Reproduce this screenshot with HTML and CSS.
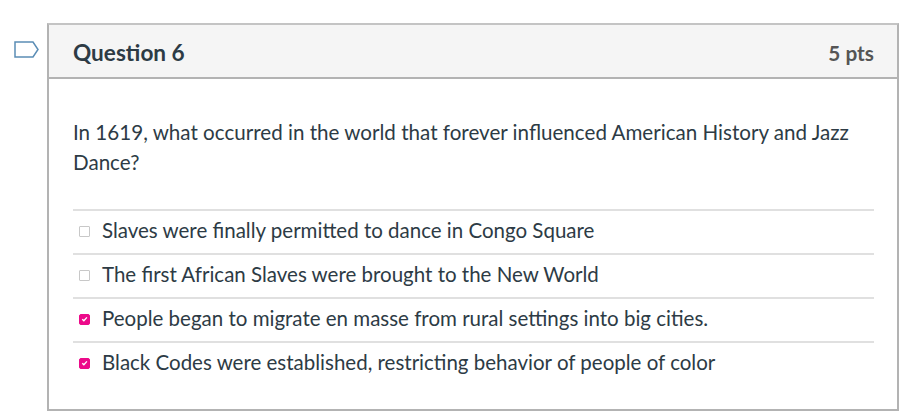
FILE: index.html
```html
<!DOCTYPE html>
<html>
<head>
<meta charset="utf-8">
<link rel="stylesheet" href="styles.css">
</head>
<body>
<div class="page">
  <div class="flag-col">
    <svg class="flag" width="26" height="17" viewBox="0 0 26 17">
      <path d="M1 1 H19 L24 8.5 L19 16 H1 Z" fill="none" stroke="#5b8db5" stroke-width="1.5" stroke-linejoin="miter"/>
    </svg>
  </div>
  <div class="card">
    <div class="header">
      <span class="title">Question 6</span>
      <span class="pts">5 pts</span>
    </div>
    <div class="body">
      <p class="question">In 1619, what occurred in the world that forever influenced American History and Jazz Dance?</p>
      <div class="answers">
        <div class="answer"><span class="box"></span><span>Slaves were finally permitted to dance in Congo Square</span></div>
        <div class="answer"><span class="box"></span><span>The first African Slaves were brought to the New World</span></div>
        <div class="answer"><span class="box checked"><svg viewBox="0 0 12 12" width="12" height="12"><path d="M3 6.2 L5.2 8.4 L9.2 3.8" fill="none" stroke="#fff" stroke-width="1.8"/></svg></span><span>People began to migrate en masse from rural settings into big cities.</span></div>
        <div class="answer"><span class="box checked"><svg viewBox="0 0 12 12" width="12" height="12"><path d="M3 6.2 L5.2 8.4 L9.2 3.8" fill="none" stroke="#fff" stroke-width="1.8"/></svg></span><span>Black Codes were established, restricting behavior of people of color</span></div>
      </div>
    </div>
  </div>
</div>
</body>
</html>
```
FILE: styles.css
```css
html, body {
  margin: 0;
  padding: 0;
  background: #fff;
  font-family: Lato, "Liberation Sans", sans-serif;
  color: #2d3b45;
}
.page {
  display: flex;
  padding-top: 23px;
}
.flag-col {
  width: 47px;
  flex: none;
  padding-top: 18px;
  padding-left: 14px;
  box-sizing: border-box;
}
.flag {
  display: block;
}
.card {
  width: 852px;
  height: 388px;
  box-sizing: border-box;
  border: 2px solid #b3b3b3;
  border-top-color: #c4c4c4;
}
.header {
  height: 54px;
  box-sizing: border-box;
  background: #f5f5f5;
  border-bottom: 2px solid #b3b3b3;
  display: flex;
  align-items: center;
  justify-content: space-between;
  padding: 3px 23px 0 24px;
}
.title {
  font-size: 22.6px;
  font-weight: 700;
  color: #2d3b45;
}
.pts {
  font-size: 20.8px;
  font-weight: 700;
  color: #555;
}
.body {
  padding: 39px 23px 0 24px;
}
.question {
  margin: 0;
  font-size: 20.6px;
  line-height: 29.5px;
}
.answers {
  margin-top: 32px;
}
.answer {
  border-top: 2px solid #e0e0e0;
  height: 44px;
  box-sizing: border-box;
  display: flex;
  align-items: center;
  font-size: 20.5px;
  padding-left: 6px;
  padding-bottom: 5px;
  gap: 12px;
}
.box {
  width: 11px;
  height: 11px;
  border: 1px solid #c8c8c8;
  border-radius: 1px;
  box-sizing: border-box;
  display: flex;
  align-items: center;
  justify-content: center;
  margin-top: 3px;
  flex: none;
}
.box.checked {
  background: #ec0a8a;
  border-color: #ec0a8a;
  border-radius: 2px;
}
.box svg {
  width: 10px;
  height: 10px;
}
```
